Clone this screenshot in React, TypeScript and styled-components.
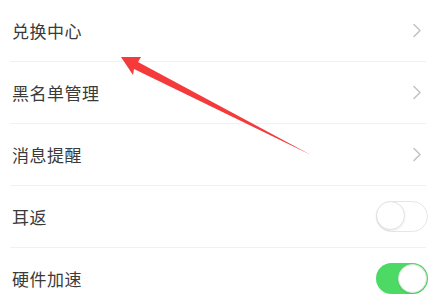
import React from 'react';
import styled, { createGlobalStyle } from 'styled-components';

const GlobalStyle = createGlobalStyle`
  html, body {
    margin: 0;
    padding: 0;
    background: #ffffff;
  }
  body {
    font-family: "Noto Sans CJK SC", "Noto Sans", sans-serif;
  }
`;

const Page = styled.div`
  position: relative;
  width: 437px;
  height: 307px;
  overflow: hidden;
  background: #fff;
`;

const List = styled.div`
  display: flex;
  flex-direction: column;
  padding: 0 11px 0 10px;
`;

const Row = styled.div<{ last?: boolean }>`
  display: flex;
  align-items: center;
  justify-content: space-between;
  height: 61px;
  padding-left: 2px;
  border-bottom: ${p => (p.last ? 'none' : '1px solid #f1f1f1')};
`;

const Label = styled.span`
  font-size: 17px;
  color: #3a3a3a;
  letter-spacing: 0.5px;
  margin-top: -1px;
`;

const Chevron = styled.svg`
  width: 10px;
  height: 15px;
  margin-right: 4px;
`;

const Toggle = styled.div<{ on?: boolean }>`
  position: relative;
  width: 52px;
  height: 31px;
  border-radius: 16px;
  box-sizing: border-box;
  background: ${p => (p.on ? '#4cd964' : '#fff')};
  border: ${p => (p.on ? 'none' : '1.5px solid #e6e6e6')};
  margin-right: -2px;
`;

const Knob = styled.div<{ on?: boolean }>`
  position: absolute;
  top: ${p => (p.on ? '1px' : '-1px')};
  ${p => (p.on ? 'right: 1px;' : 'left: -1px;')}
  width: 29px;
  height: 29px;
  border-radius: 50%;
  background: #fff;
  box-sizing: border-box;
  border: 1px solid #e2e2e2;
  box-shadow: 0 1px 2px rgba(0, 0, 0, 0.08);
`;

const ArrowLayer = styled.svg`
  position: absolute;
  left: 0;
  top: 0;
  width: 437px;
  height: 307px;
  pointer-events: none;
`;

const ChevronIcon = () => (
  <Chevron viewBox="0 0 10 15">
    <path d="M2 1.5 L8 7.5 L2 13.5" fill="none" stroke="#c4c4c4" strokeWidth="1.6" strokeLinecap="round" strokeLinejoin="round" />
  </Chevron>
);

type Item = { label: string; kind: 'link' | 'off' | 'on' };

const items: Item[] = [
  { label: '兑换中心', kind: 'link' },
  { label: '黑名单管理', kind: 'link' },
  { label: '消息提醒', kind: 'link' },
  { label: '耳返', kind: 'off' },
  { label: '硬件加速', kind: 'on' },
];

export default function App() {
  return (
    <Page>
      <GlobalStyle />
      <List>
        {items.map((it, i) => (
          <Row key={it.label} last={i === items.length - 1}>
            <Label>{it.label}</Label>
            {it.kind === 'link' ? (
              <ChevronIcon />
            ) : (
              <Toggle on={it.kind === 'on'}>
                <Knob on={it.kind === 'on'} />
              </Toggle>
            )}
          </Row>
        ))}
      </List>
      <ArrowLayer viewBox="0 0 437 307">
        <path d="M121 57 L141 57 L138 62 L311 155 L134 69 L133 75 Z" fill="#f43a3a" />
      </ArrowLayer>
    </Page>
  );
}
